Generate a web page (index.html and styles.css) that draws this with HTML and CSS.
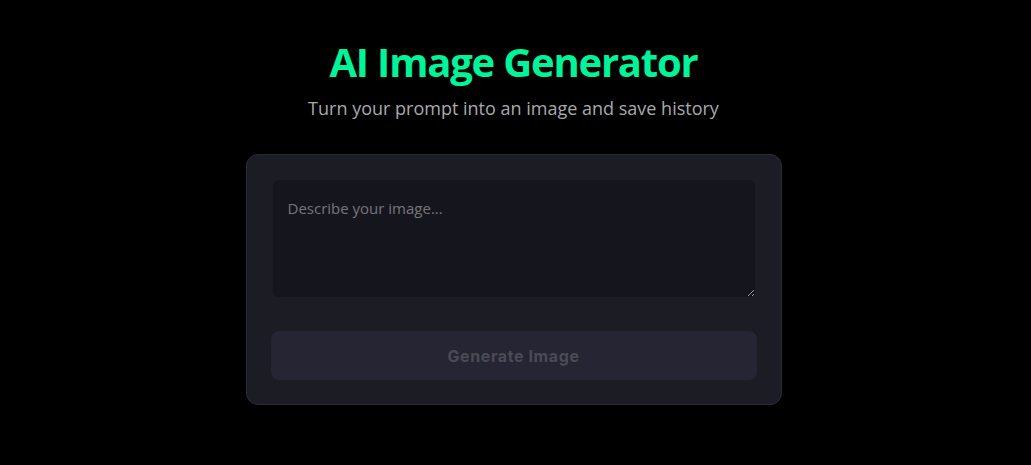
FILE: index.html
```html
<!DOCTYPE html>
<html lang="en">
<head>
<meta charset="utf-8">
<title>AI Image Generator</title>
<link rel="stylesheet" href="styles.css">
</head>
<body>
<main class="page">
  <h1 class="title">AI Image Generator</h1>
  <p class="subtitle">Turn your prompt into an image and save history</p>
  <section class="card">
    <textarea class="prompt" placeholder="Describe your image..."></textarea>
    <button class="generate" disabled>Generate Image</button>
  </section>
</main>
</body>
</html>
```

FILE: styles.css
```css
html, body {
  margin: 0;
  padding: 0;
  background: #000;
}
body {
  font-family: "Open Sans", "Noto Sans", sans-serif;
}
.page {
  display: flex;
  flex-direction: column;
  align-items: center;
  padding-top: 36px;
  padding-right: 4px;
}
.title {
  margin: 0;
  font-size: 40px;
  font-weight: 700;
  line-height: 52px;
  color: #00f59b;
  letter-spacing: -1.2px;
}
.subtitle {
  margin: 8px 0 0;
  font-size: 18px;
  line-height: 24px;
  color: #a8a8ae;
}
.card {
  margin-top: 34px;
  width: 486px;
  padding: 24px;
  background: #1c1c24;
  border: 1px solid #2b2b35;
  border-radius: 12px;
  display: flex;
  flex-direction: column;
}
.prompt {
  margin: 1px 2px 0;
  height: 117px;
  box-sizing: border-box;
  padding: 18px 15px;
  background: #15151d;
  border: none;
  border-radius: 6px;
  color: #ddd;
  font-family: "Open Sans", "Noto Sans", sans-serif;
  font-size: 15px;
  resize: vertical;
  outline: none;
}
.prompt::placeholder {
  color: #75757c;
}
.generate {
  margin-top: 34px;
  height: 49px;
  border: none;
  border-radius: 8px;
  background: #252533;
  color: #4b4b55;
  font-family: "Inter", sans-serif;
  font-size: 16px;
  font-weight: 700;
  letter-spacing: 0.6px;
}
```
